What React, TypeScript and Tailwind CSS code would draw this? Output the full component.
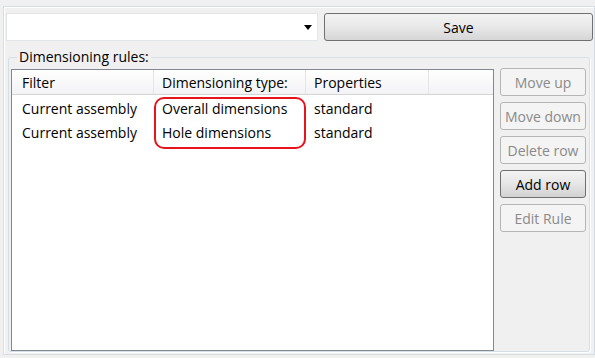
import React from "react";

const font = { fontFamily: '"Open Sans", "Noto Sans", sans-serif' };

function Btn({ label, enabled = false }: { label: string; enabled?: boolean }) {
  return (
    <div
      className={
        enabled
          ? "h-[28px] flex items-center justify-center rounded-[3px] border border-[#707070] bg-gradient-to-b from-[#f3f3f3] via-[#e6e6e6] to-[#d2d2d2] text-[14px] text-black"
          : "h-[28px] flex items-center justify-center rounded-[3px] border border-[#b5b5b5] bg-[#f4f4f4] text-[14px] text-[#8a8a8a]"
      }
    >
      {label}
    </div>
  );
}

export default function App() {
  const rows = [
    ["Current assembly", "Overall dimensions", "standard"],
    ["Current assembly", "Hole dimensions", "standard"],
  ];
  return (
    <div className="w-[595px] h-[358px] bg-[#f0f0f0] pl-[3px] pt-[6px] pb-[3px] flex" style={font}>
      <div className="flex-1 flex flex-col border border-[#d8dde3] shadow-[inset_1px_1px_0_#ffffff]">
        <div className="flex pl-[2px] pt-[6px] pr-[1px] gap-[6px]">
          <div className="w-[312px] h-[28px] bg-white border border-[#e1e4e8] flex items-center justify-end pr-[5px]">
            <svg width="8" height="5" viewBox="0 0 8 5">
              <path d="M0 0 L8 0 L4 5 Z" fill="#000" />
            </svg>
          </div>
          <div className="flex-1 h-[28px] flex items-center justify-center rounded-[3px] border border-[#707070] bg-gradient-to-b from-[#f3f3f3] via-[#e8e8e8] to-[#d6d6d6] text-[14px] text-black">
            Save
          </div>
        </div>
        <div className="relative flex-1 ml-[4px] mr-[4px] mt-[16px] mb-[2px] border border-[#d5dfe5] rounded-[3px] shadow-[1px_1px_0_#ffffff] flex pl-[2px] pt-[10px] pr-[1px] gap-[6px]">
          <div className="absolute left-[8px] top-[-11px] bg-[#f0f0f0] px-[2px] text-[14px] leading-[20px] text-black">
            Dimensioning rules:
          </div>
          <div className="relative mt-[1px] w-[483px] bg-white border border-[#828790] flex flex-col">
            <div className="flex h-[25px] border-b border-[#d5d5d5] bg-gradient-to-b from-white to-[#f2f3f5] text-[14px] text-black">
              <div className="w-[142px] pl-[10px] border-r border-[#e5e5e5] flex items-center">Filter</div>
              <div className="w-[152px] pl-[8px] border-r border-[#e5e5e5] flex items-center">Dimensioning type:</div>
              <div className="w-[123px] pl-[8px] border-r border-[#e5e5e5] flex items-center">Properties</div>
              <div className="flex-1" />
            </div>
            <div className="pt-[1px]">
              {rows.map((r, i) => (
                <div key={i} className="flex h-[24px] items-center text-[14px] text-black">
                  <div className="w-[142px] pl-[10px]">{r[0]}</div>
                  <div className="w-[152px] pl-[8px]">{r[1]}</div>
                  <div className="w-[123px] pl-[8px]">{r[2]}</div>
                </div>
              ))}
            </div>
            <div className="absolute left-[142px] top-[27px] w-[152px] h-[52px] border-2 border-[#e8141b] rounded-[10px]" />
          </div>
          <div className="w-[86px] flex flex-col gap-[6px]">
            <Btn label="Move up" />
            <Btn label="Move down" />
            <Btn label="Delete row" />
            <Btn label="Add row" enabled />
            <Btn label="Edit Rule" />
          </div>
        </div>
      </div>
    </div>
  );
}
